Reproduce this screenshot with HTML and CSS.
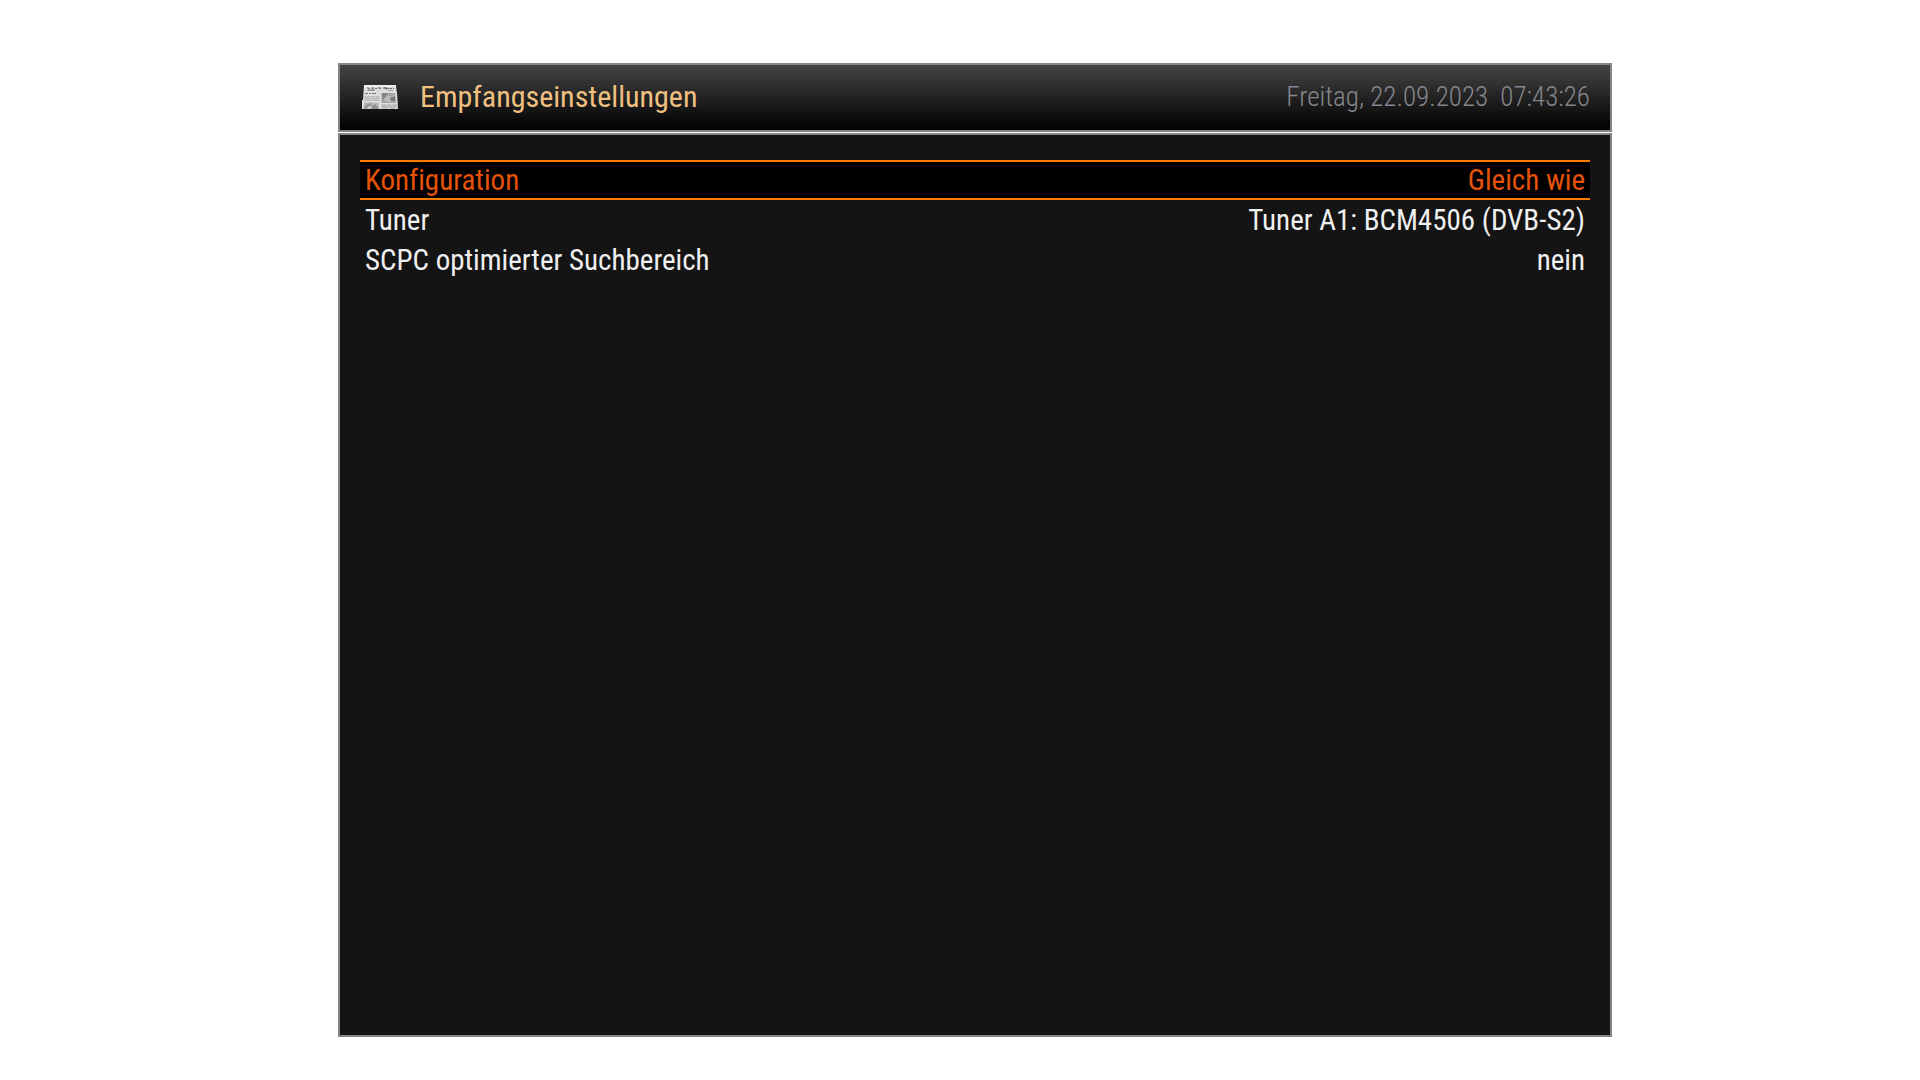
FILE: index.html
```html
<!DOCTYPE html>
<html lang="de">
<head>
  <meta charset="UTF-8">
  <meta name="viewport" content="width=device-width, initial-scale=1.0">
  <title>Empfangseinstellungen</title>
  <link rel="stylesheet" href="styles.css">
</head>
<body>
  <header class="title-bar">
    <svg class="title-icon" viewBox="0 0 36 24" aria-hidden="true">
      <path d="M2 0H34L34.500 6L35 7L36 24H0V15H1Z" fill="#dedede"/>
      <path d="M2 0H34L34 2H2Z" fill="#efefef"/>
      <!-- masthead -->
      <path d="M6 2V4H8.500M9.500 3H12M9.500 4.200H12M13 3.500H15M16 3H18M18.500 2.500V4.200M22 4.200V2.200L24.500 4.200V2.200M25.500 3.500H27.500M28 2.800L29 4L30 2.800M31 3.500H32" fill="none" stroke="#555" stroke-width=".9"/>
      <path d="M5 5.500H13M26 5.500H31" stroke="#8a8a8a" stroke-width=".8"/>
      <!-- left column -->
      <path d="M3 8.500H6M7 8.500H9M10 8.500H14" stroke="#777" stroke-width="1"/>
      <path d="M2 11.500H18M2 13.500H18M2 15.500H18" stroke="#bababa" stroke-width="1"/>
      <path d="M3 12.500H7M9 12.500H12M14 12.500H17M4 14.500H9M11 14.500H16" stroke="#c4c4c4" stroke-width="1"/>
      <path d="M2 17.500H16.500L17 24H1.500Z" fill="#b8b8b8"/>
      <path d="M2 22L6 19L8 18L10 21L13 19L16 22L16 24H3Z" fill="#929292"/>
      <path d="M4 24L8 20L10 22L9 24Z" fill="#ccc"/>
      <!-- right column -->
      <path d="M19.500 8H33L34 18H19.500Z" fill="#a2a2a2"/>
      <path d="M20 8H26L23 13L20 15Z" fill="#858585"/>
      <path d="M21 15L26 10L29 12L32 9L33 16L27 17Z" fill="#bcbcbc"/>
      <path d="M28 13L33 11V16H29Z" fill="#777"/>
      <path d="M19 20H35M19 22H35" stroke="#b0b0b0" stroke-width="1"/>
      <path d="M20 21H24M26 21H29M31 21H34M21 23H26M28 23H33" stroke="#a8a8a8" stroke-width="1"/>
    </svg>
    <h1>Empfangseinstellungen</h1>
    <time class="clock" datetime="2023-09-22T07:43:26">Freitag, 22.09.2023&nbsp; 07:43:26</time>
  </header>

  <main class="content">
    <ul class="settings-list">
      <li>
        <button type="button" class="setting selected">
          <span>Konfiguration</span>
          <span>Gleich wie</span>
        </button>
      </li>
      <li>
        <button type="button" class="setting">
          <span>Tuner</span>
          <span>Tuner A1: BCM4506 (DVB-S2)</span>
        </button>
      </li>
      <li>
        <button type="button" class="setting">
          <span>SCPC optimierter Suchbereich</span>
          <span>nein</span>
        </button>
      </li>
    </ul>
  </main>
</body>
</html>
```

FILE: styles.css
```css
:root {
  --frame-color: #858585;
  --panel-bg: #141414;
  --title-color: #f0c080;
  --clock-color: #84878f;
  --text-color: #f0f0f0;
  --selected-color: #e5520a;
  --selected-line: #ff7a00;
}

* {
  box-sizing: border-box;
}

body {
  display: flex;
  flex-direction: column;
  gap: 1px;
  min-height: 100vh;
  margin: 0;
  padding: 63px 308px 43px 338px;
  background: white;
  color: var(--text-color);
  font-family: 'Roboto Condensed', Roboto, sans-serif;
  font-size: 29px;
  font-variant-ligatures: none;
}

.title-bar {
  display: flex;
  align-items: center;
  height: 69px;
  padding: 0 20px 2px 22px;
  border: 2px solid var(--frame-color);
  background: linear-gradient(#444, #000);
}

.title-icon {
  width: 36px;
  height: 24px;
  margin-right: 22px;
}

.title-bar h1 {
  margin: 0;
  color: var(--title-color);
  font-size: 30px;
  font-weight: 400;
}

.clock {
  margin-left: auto;
  color: var(--clock-color);
  font-size: 27px;
  font-weight: 300;
}

.content {
  flex: 1;
  padding: 25px 20px;
  border: 2px solid var(--frame-color);
  background: var(--panel-bg);
}

.settings-list {
  margin: 0;
  padding: 0;
  list-style: none;
}

.setting {
  display: flex;
  justify-content: space-between;
  align-items: center;
  width: 100%;
  height: 40px;
  padding: 0 5px;
  border: 0 solid transparent;
  border-width: 2px 0;
  background: none;
  color: inherit;
  font: inherit;
  font-variant-ligatures: inherit;
  cursor: pointer;
}

.setting.selected {
  border-color: var(--selected-line);
  background: black;
  color: var(--selected-color);
}
```
